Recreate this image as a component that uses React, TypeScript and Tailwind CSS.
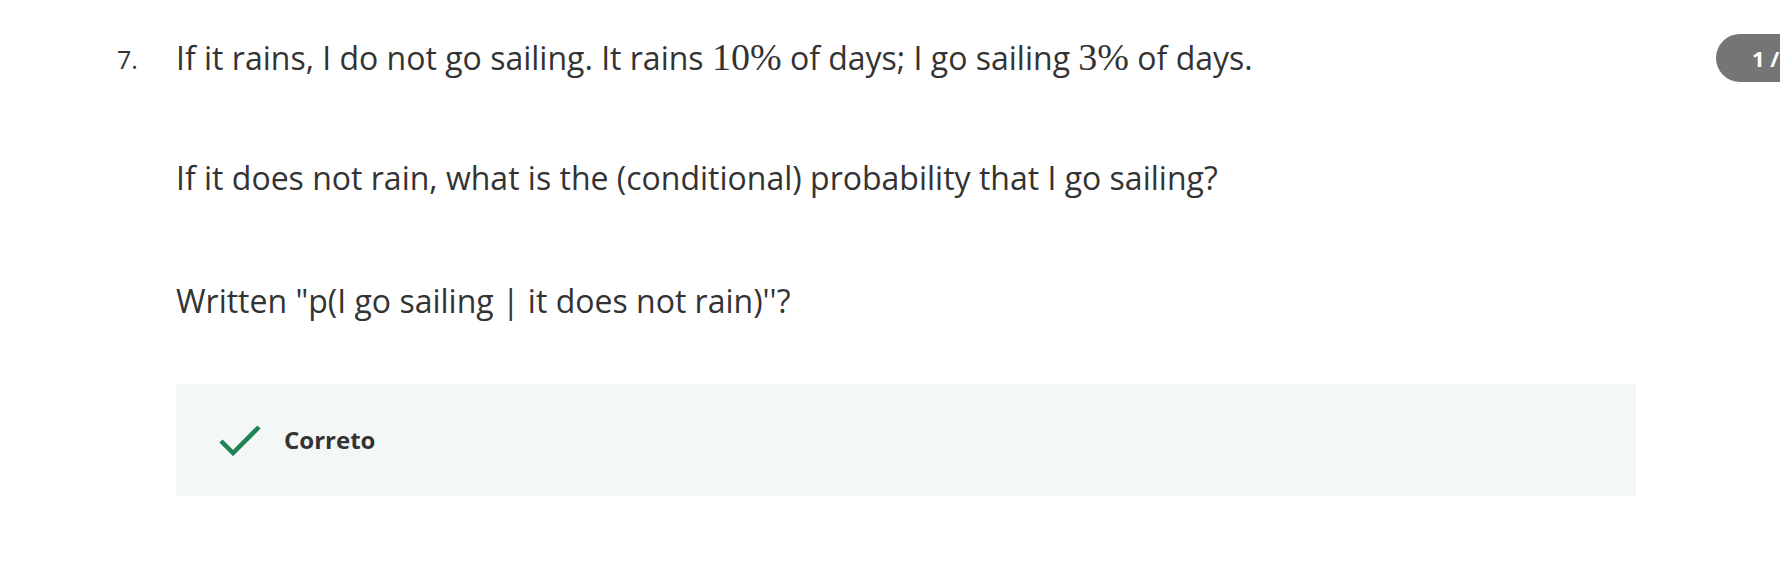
import React from "react";

function M({ children }: { children: React.ReactNode }) {
  return (
    <span className="font-['Liberation_Serif','DejaVu_Serif',serif] text-[38px] leading-none">
      {children}
    </span>
  );
}

export default function App() {
  return (
    <div className="relative w-[1780px] h-[570px] overflow-hidden bg-white font-['Open_Sans',sans-serif] text-[#333333]">
      <div className="flex pl-[117px] pt-[34px]">
        <div className="w-[59px] shrink-0 text-[25px] leading-[48px] pt-[1px]">7.</div>
        <div className="w-[1460px] shrink-0">
          <p className="text-[32px] leading-[48px]">
            If it rains, I do not go sailing. It rains <M>10%</M> of days; I go sailing <M>3%</M> of days.
          </p>
          <p className="mt-[72px] text-[32px] leading-[48px]">
            If it does not rain, what is the (conditional) probability that I go sailing?
          </p>
          <p className="mt-[75px] text-[32px] leading-[48px]">
            Written "p(I go sailing | it does not rain)''?
          </p>
          <div className="mt-[59px] flex h-[112px] items-center bg-[#f3f8f6] pl-[43px]">
            <svg width="42" height="32" viewBox="0 0 42 32" className="shrink-0">
              <path d="M2 17 L14 29 L40 3" fill="none" stroke="#1f8354" strokeWidth="4.5" />
            </svg>
            <span className="ml-[23px] text-[24px] font-bold text-[#333333]">Correto</span>
          </div>
        </div>
      </div>
      <div className="absolute left-[1716px] top-[34px] flex h-[48px] items-center rounded-full bg-[#757575] px-[36px] text-[22px] font-bold text-white whitespace-nowrap">
        1 / 1 ponto
      </div>
    </div>
  );
}
